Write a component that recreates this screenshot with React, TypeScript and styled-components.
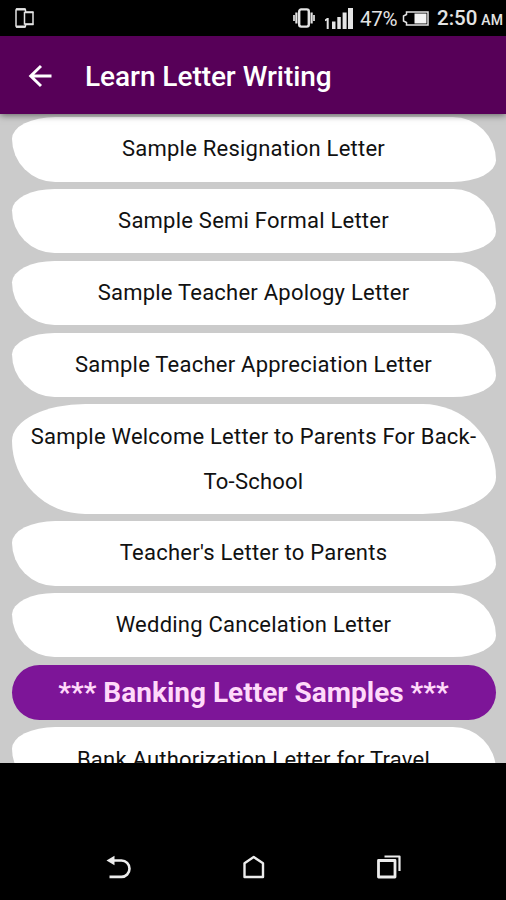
import React from "react";
import styled, { createGlobalStyle } from "styled-components";

const GlobalStyle = createGlobalStyle`
  * { box-sizing: border-box; }
  body { margin: 0; background: #000; font-family: Roboto, sans-serif; }
`;

const Screen = styled.div`
  width: 506px;
  height: 900px;
  display: flex;
  flex-direction: column;
  overflow: hidden;
  background: #000;
`;

const StatusBar = styled.div`
  height: 36px;
  flex: none;
  display: flex;
  align-items: center;
  padding: 0 5px 0 14px;
  color: #e4e4e4;
`;

const StatusIcon = styled.svg<{ $gap: number }>`
  flex: none;
  margin-right: ${(p) => p.$gap}px;
`;

const Spacer = styled.div`
  flex: 1;
`;

const Battery = styled.span`
  width: 42px;
  font-size: 20.5px;
  line-height: 36px;
  letter-spacing: -0.3px;
  padding-top: 2px;
`;

const Clock = styled.span`
  width: 64px;
  font-size: 20.5px;
  font-weight: 500;
  line-height: 36px;
  white-space: nowrap;
  padding-top: 2px;
`;

const Meridiem = styled.small`
  font-size: 14px;
  margin-left: 4px;
`;

const AppBar = styled.header`
  height: 78px;
  flex: none;
  display: flex;
  align-items: center;
  padding: 1px 0 0 28px;
  background: #570058;
  box-shadow: 0 1px 7px rgba(0, 0, 0, 0.55);
  z-index: 1;
`;

const Title = styled.h1`
  margin: 3px 0 0 33px;
  color: #fff;
  font-size: 28px;
  font-weight: 500;
  line-height: 36px;
  letter-spacing: -0.05px;
  white-space: nowrap;
`;

const List = styled.main`
  height: 649px;
  flex: none;
  overflow: hidden;
  display: flex;
  flex-direction: column;
  gap: 7.4px;
  padding: 3.3px 10.5px 0 11.5px;
  background: #cbcbcb;
`;

const Card = styled.div`
  flex: none;
  padding: 9.2px 10px 10.2px;
  background: #fff;
  border-radius: 200px / 100px 200px;
  color: #111;
  font-size: 22px;
  line-height: 45px;
  letter-spacing: 0.23px;
  text-align: center;
`;

const CardLine = styled.span`
  display: block;
  white-space: nowrap;
`;

const Section = styled.h2`
  flex: none;
  height: 55.4px;
  margin: 0;
  border-radius: 28px;
  background: #7d1598;
  color: #ffd9fa;
  font-size: 28px;
  font-weight: 700;
  line-height: 55.4px;
  text-align: center;
  white-space: nowrap;
`;

const NavBar = styled.nav`
  flex: 1;
  display: flex;
  align-items: flex-end;
  justify-content: space-between;
  padding: 0 104px 20px 105px;
`;

const letters: string[][] = [
  ["Sample Resignation Letter"],
  ["Sample Semi Formal Letter"],
  ["Sample Teacher Apology Letter"],
  ["Sample Teacher Appreciation Letter"],
  ["Sample Welcome Letter to Parents For Back-", "To-School"],
  ["Teacher's Letter to Parents"],
  ["Wedding Cancelation Letter"],
];

function LetterCard({ lines }: { lines: string[] }) {
  return (
    <Card>
      {lines.map((line) => (
        <CardLine key={line}>{line}</CardLine>
      ))}
    </Card>
  );
}

export default function App() {
  return (
    <>
      <GlobalStyle />
      <Screen>
        <StatusBar>
          <StatusIcon $gap={0} width="21" height="22" viewBox="0 0 21 22" fill="none" stroke="#e4e4e4" strokeWidth="1.5">
            <path d="M11.5 5V3Q11.5 2 10.5 2H3Q2 2 2 3V19Q2 20 3 20H10.500Q11.500 20 11.500 19V17" />
            <path d="M2 2.300H11.500M2 19.700H11.500" strokeWidth="2.200" />
            <rect x="10.500" y="5.500" width="8.500" height="11.500" />
            <path d="M11 5H19.500M11 17.500H19.500" strokeWidth="1.500" />
          </StatusIcon>
          <Spacer />
          <StatusIcon $gap={9} width="22" height="20" viewBox="0 0 22 20" fill="none" stroke="#e4e4e4">
            <rect x="6.200" y="1.400" width="9.600" height="17.200" rx="2" strokeWidth="2.400" />
            <path d="M3.400 4.500V15.500M18.600 4.500V15.500" strokeWidth="2.200" />
            <path d="M1 7V13M21 7V13" strokeWidth="1.700" />
          </StatusIcon>
          <StatusIcon $gap={6} width="30" height="22" viewBox="0 0 30 22" fill="#e4e4e4">
            <path d="M3 11H4.700V22H2.700V13.400L1 14.200V12.400Z" />
            <rect x="8" y="14.500" width="3.500" height="7.500" />
            <rect x="13.300" y="10" width="3.500" height="12" />
            <rect x="18.600" y="5.500" width="4" height="16.500" />
            <rect x="24" y="1" width="5" height="21" />
          </StatusIcon>
          <Battery>47%</Battery>
          <StatusIcon $gap={8} width="27" height="15" viewBox="0 0 27 15" fill="none" stroke="#e4e4e4" strokeWidth="1.500">
            <path d="M4.500 1H26V14H4.500V11.500L1.500 10V5L4.500 3.500Z" />
            <rect x="12.500" y="2.500" width="12" height="10" fill="#f4f4f4" stroke="none" />
          </StatusIcon>
          <Clock>
            2:50<Meridiem>AM</Meridiem>
          </Clock>
        </StatusBar>
        <AppBar>
          <svg width="24" height="24" viewBox="0 0 24 24" fill="none" stroke="#fff" strokeWidth="2.900">
            <path d="M23.500 12H3M13 2L2.700 12L13 22" />
          </svg>
          <Title>Learn Letter Writing</Title>
        </AppBar>
        <List>
          {letters.map((lines) => (
            <LetterCard key={lines[0]} lines={lines} />
          ))}
          <Section>*** Banking Letter Samples ***</Section>
          <LetterCard lines={["Bank Authorization Letter for Travel"]} />
        </List>
        <NavBar>
          <svg width="27" height="26" viewBox="0 0 27 26" fill="none" stroke="#ececec" strokeWidth="2.600">
            <path d="M8 6.500H16.500A8 8.200 0 0 1 16.500 22.900H4.500" />
            <path d="M1.500 6.500L9.500 1.800V11.200Z" fill="#ececec" stroke="none" />
          </svg>
          <svg width="24" height="26" viewBox="0 0 24 26" fill="none" stroke="#ececec" strokeWidth="2.400" strokeLinejoin="round">
            <path d="M2.500 9.200L11.700 3L21 9.200V23H2.500Z" />
          </svg>
          <svg width="26" height="26" viewBox="0 0 26 26" fill="none" stroke="#ececec" strokeLinejoin="round">
            <rect x="2.500" y="6.500" width="16.500" height="16.500" strokeWidth="2.800" />
            <path d="M8.500 2.500H23.500V17" strokeWidth="2.200" />
          </svg>
        </NavBar>
      </Screen>
    </>
  );
}
